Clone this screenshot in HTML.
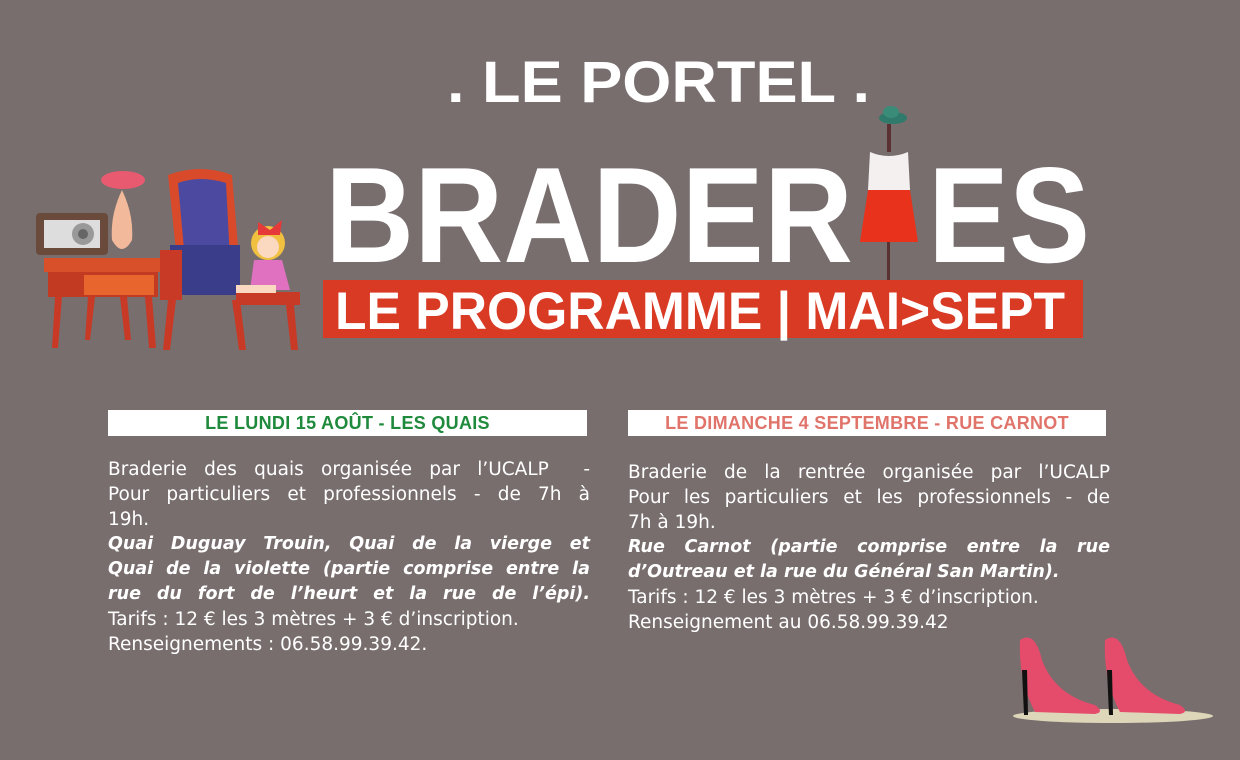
<!DOCTYPE html>
<html><head><meta charset="utf-8"><style>
body{margin:0;width:1240px;height:760px;background:#786e6e;overflow:hidden;position:relative;font-family:"Liberation Sans",sans-serif}
.hd{position:absolute;height:26px;background:#fff;font-weight:bold;font-size:18px;text-align:center;line-height:27px;letter-spacing:0.3px}
.tx{position:absolute;color:#fff;font-family:"DejaVu Sans",sans-serif;font-size:18.5px;line-height:25px;width:482px}
.tx div{text-align:justify;text-align-last:justify;white-space:nowrap;height:25px}
.tx div.l{text-align-last:left}
.tx .b{font-weight:bold;font-style:italic;font-size:17.5px}
</style></head><body>
<svg width="1240" height="760" style="position:absolute;left:0;top:0">
<text x="447" y="102" fill="#fff" font-weight="bold" font-size="58" textLength="423" lengthAdjust="spacingAndGlyphs" font-family="Liberation Sans">. LE PORTEL .</text>
<text x="325" y="262" fill="#fff" font-weight="bold" font-size="136" textLength="528" lengthAdjust="spacingAndGlyphs" font-family="Liberation Sans">BRADER</text>
<text x="928" y="262" fill="#fff" font-weight="bold" font-size="136" textLength="162" lengthAdjust="spacingAndGlyphs" font-family="Liberation Sans">ES</text>
<rect x="323" y="280" width="760" height="58" fill="#d93a24"/>
<text x="335" y="329" fill="#fff" font-weight="bold" font-size="53" textLength="730" lengthAdjust="spacingAndGlyphs" font-family="Liberation Sans">LE PROGRAMME | MAI&gt;SEPT</text>
<ellipse cx="893" cy="118" rx="14" ry="6" fill="#2f7a6a"/><ellipse cx="891" cy="112" rx="8" ry="6" fill="#3a8c78"/>
<rect x="887" y="124" width="4" height="28" fill="#5a3030"/>
<path d="M870 152 Q889 160 908 152 L910 190 L868 190 Z" fill="#f5f0f0"/>
<path d="M868 190 L910 190 L918 242 L860 242 Z" fill="#e8321c"/>
<rect x="887" y="242" width="3" height="38" fill="#5a3030"/>
<rect x="44" y="258" width="120" height="14" fill="#d8502a"/>
<rect x="48" y="272" width="110" height="25" fill="#c23a22"/>
<rect x="84" y="275" width="70" height="20" fill="#e8652e"/>
<path d="M55 297 L62 297 L58 348 L52 348 Z M145 297 L152 297 L156 348 L149 348 Z M88 297 L95 297 L90 340 L85 340Z M120 297 L127 297 L131 340 L125 340Z" fill="#c83a26"/>
<rect x="36" y="213" width="72" height="42" rx="4" fill="#6a4a3a"/>
<rect x="44" y="220" width="56" height="28" fill="#ddd"/>
<circle cx="83" cy="234" r="11" fill="#999"/><circle cx="83" cy="234" r="5" fill="#666"/>
<path d="M122 190 Q134 215 132 240 Q122 258 112 240 Q110 215 122 190Z" fill="#f2b99a"/>
<ellipse cx="123" cy="180" rx="22" ry="9" fill="#e85a70"/>
<path d="M168 175 Q200 163 232 175 L240 270 L178 270 Z" fill="#d94a2a"/>
<path d="M178 183 Q200 175 226 183 L230 260 L185 260 Z" fill="#4b4aa0"/>
<rect x="170" y="245" width="70" height="50" fill="#3a3d8a"/>
<rect x="160" y="250" width="22" height="50" fill="#c83a26"/>
<path d="M236 292 L300 292 L300 305 L236 305 Z" fill="#c83a26"/>
<path d="M168 300 L176 300 L170 350 L163 350Z M232 300 L240 300 L246 350 L239 350Z M286 305 L294 305 L298 350 L291 350Z" fill="#c83a26"/>
<circle cx="268" cy="243" r="17" fill="#f0c040"/><circle cx="268" cy="247" r="11" fill="#fbd8c0"/>
<path d="M258 222 L270 230 L282 220 L280 235 L258 235Z" fill="#e63a3a"/>
<path d="M254 260 L282 260 L290 290 L250 290Z" fill="#e070c0"/>
<rect x="236" y="285" width="40" height="8" fill="#fbd8c0"/>
<ellipse cx="1113" cy="716" rx="100" ry="7" fill="#ddd6b8"/>
<path d="M1020 640 Q1035 630 1042 660 Q1055 695 1095 705 Q1105 712 1095 714 L1035 712 Q1018 680 1020 640Z" fill="#e54b6a"/>
<path d="M1022 670 L1027 670 L1028 715 L1024 715Z" fill="#111"/>
<path d="M1105 640 Q1120 630 1127 660 Q1140 695 1180 705 Q1190 712 1180 714 L1120 712 Q1103 680 1105 640Z" fill="#e54b6a"/>
<path d="M1107 670 L1112 670 L1113 715 L1109 715Z" fill="#111"/>
</svg>
<div class="hd" style="left:108px;top:410px;width:479px;color:#1f8a3c">LE LUNDI 15 AOÛT - LES QUAIS</div>
<div class="hd" style="left:628px;top:410px;width:478px;color:#e0746a">LE DIMANCHE 4 SEPTEMBRE - RUE CARNOT</div>
<div class="tx" style="left:108px;top:457px">
<div>Braderie des quais organisée par l’UCALP&nbsp; -</div>
<div>Pour particuliers et professionnels - de 7h à</div>
<div class="l">19h.</div>
<div class="b">Quai Duguay Trouin, Quai de la vierge et</div>
<div class="b">Quai de la violette (partie comprise entre la</div>
<div class="b">rue du fort de l’heurt et la rue de l’épi).</div>
<div class="l">Tarifs : 12 € les 3 mètres + 3 € d’inscription.</div>
<div class="l">Renseignements : 06.58.99.39.42.</div>
</div>
<div class="tx" style="left:628px;top:460px">
<div>Braderie de la rentrée organisée par l’UCALP</div>
<div>Pour les particuliers et les professionnels - de</div>
<div class="l">7h à 19h.</div>
<div class="b">Rue Carnot (partie comprise entre la rue</div>
<div class="b l">d’Outreau et la rue du Général San Martin).</div>
<div class="l">Tarifs : 12 € les 3 mètres + 3 € d’inscription.</div>
<div class="l">Renseignement au 06.58.99.39.42</div>
</div>
</body></html>
